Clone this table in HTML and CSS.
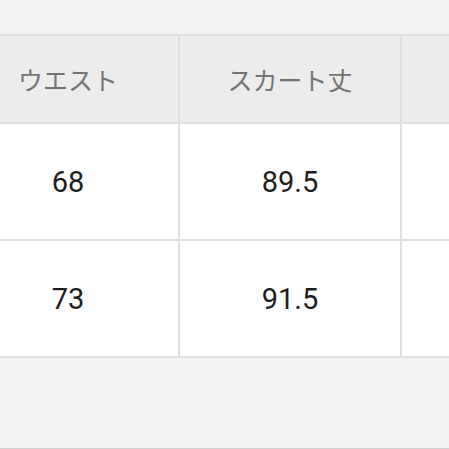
FILE: index.html
```html
<!DOCTYPE html>
<html lang="ja">
<head>
<meta charset="utf-8">
<link rel="stylesheet" href="styles.css">
</head>
<body>
<div class="page">
  <div class="size-table">
    <div class="cell head">ウエスト</div>
    <div class="cell head">スカート丈</div>
    <div class="cell head"></div>
    <div class="cell">68</div>
    <div class="cell">89.5</div>
    <div class="cell"></div>
    <div class="cell">73</div>
    <div class="cell">91.5</div>
    <div class="cell"></div>
  </div>
  <div class="bottom-line"></div>
</div>
</body>
</html>
```
FILE: styles.css
```css
html, body {
  margin: 0;
  padding: 0;
  background: #f4f2f2;
}
.page {
  width: 449px;
  height: 449px;
  overflow: hidden;
  position: relative;
  display: flex;
  flex-direction: column;
  padding-top: 34px;
  box-sizing: border-box;
}
.size-table {
  display: grid;
  grid-template-columns: 220px 220px 220px;
  grid-template-rows: 86px 115px 115px;
  gap: 2px;
  padding: 2px;
  background: #dfdfdf;
  margin-left: -44px;
  width: max-content;
}
.cell {
  background: #ffffff;
  display: flex;
  align-items: center;
  justify-content: center;
  font-family: Roboto, "Noto Sans CJK JP", sans-serif;
  font-size: 29px;
  color: #1e1e1e;
}
.cell.head {
  background: #ececec;
  font-family: "Noto Sans CJK JP", sans-serif;
  font-size: 25px;
  color: #747474;
}
.bottom-line {
  margin-top: auto;
  height: 1px;
  background: #d0d0d0;
}
```
